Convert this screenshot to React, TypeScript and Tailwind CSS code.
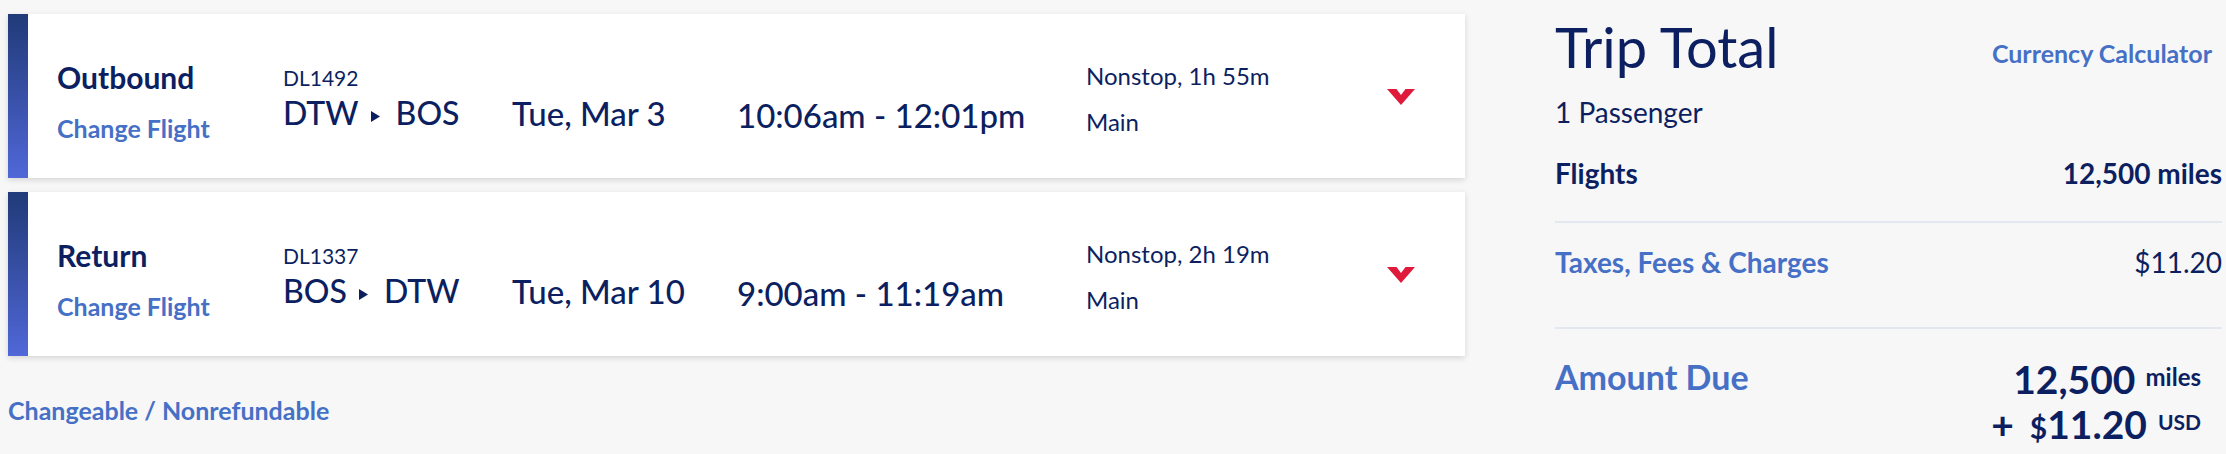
import React from "react";

type Leg = {
  label: string;
  flight: string;
  from: string;
  to: string;
  date: string;
  time: string;
  duration: string;
  cabin: string;
};

const legs: Leg[] = [
  {
    label: "Outbound",
    flight: "DL1492",
    from: "DTW",
    to: "BOS",
    date: "Tue, Mar 3",
    time: "10:06am - 12:01pm",
    duration: "Nonstop, 1h 55m",
    cabin: "Main",
  },
  {
    label: "Return",
    flight: "DL1337",
    from: "BOS",
    to: "DTW",
    date: "Tue, Mar 10",
    time: "9:00am - 11:19am",
    duration: "Nonstop, 2h 19m",
    cabin: "Main",
  },
];

function FlightCard({ leg }: { leg: Leg }) {
  return (
    <div className="flex h-[164px] bg-white shadow-[0_2px_6px_rgba(0,0,0,0.14)]">
      {/* side bar */}
      <div className="w-[20px] shrink-0 bg-linear-to-b from-[#213a78] to-[#5068d8]" />

      <div className="ml-[29px] mt-[45px] flex w-[226px] flex-col">
        <span className="text-[30px] font-bold leading-[36px]">{leg.label}</span>
        <a href="#" className="mt-[18px] text-[25px] font-bold leading-[30px] text-[#4670c6]">
          Change Flight
        </a>
      </div>

      <div className="mt-[52px] flex w-[229px] flex-col">
        <span className="text-[21px] leading-[24px]">{leg.flight}</span>
        <div className="mt-[4px] flex items-start text-[32px] font-medium leading-[38px]">
          <span>{leg.from}</span>
          <svg className="ml-[12px] mr-[16px] mt-[17px]" width="9" height="11" viewBox="0 0 9 11">
            <polygon points="0,0 9,5.5 0,11" fill="#0c1f61" />
          </svg>
          <span>{leg.to}</span>
        </div>
      </div>

      <div className="mt-[80px] w-[225px] text-[33px] font-medium leading-[38px]">{leg.date}</div>
      <div className="mt-[81px] w-[349px] text-[33px] font-medium leading-[40px]">{leg.time}</div>

      <div className="mt-[47px] flex w-[301px] flex-col text-[24px] leading-[30px]">
        <span>{leg.duration}</span>
        <span className="mt-[16px]">{leg.cabin}</span>
      </div>

      <button className="mt-[75px] h-[16px] w-[28px]">
        <svg width="28" height="16" viewBox="0 0 28 16">
          <polygon points="0,0 9.5,0 14,6 18.5,0 28,0 14,16" fill="#e01a3b" />
        </svg>
      </button>
    </div>
  );
}

export default function App() {
  return (
    <div className="flex h-[454px] w-[2226px] bg-[#f7f7f7] pl-[8px] pt-[14px] font-['Lato','Open_Sans',sans-serif] text-[#0c1f61]">
      {/* Flights */}
      <div className="flex w-[1457px] flex-col">
        <FlightCard leg={legs[0]} />
        <div className="mt-[14px]">
          <FlightCard leg={legs[1]} />
        </div>
        <a href="#" className="mt-[39px] text-[25px] font-bold leading-[30px] text-[#4670c6]">
          Changeable / Nonrefundable
        </a>
      </div>

      {/* Trip total */}
      <div className="ml-[90px] flex w-[667px] flex-col">
        <div className="flex items-start justify-between">
          <h2 className="text-[56px] leading-[66px]">Trip Total</h2>
          <a href="#" className="mr-[10px] mt-[25px] text-[25px] font-bold leading-[28px] text-[#4670c6]">
            Currency Calculator
          </a>
        </div>
        <p className="mt-[15px] text-[28px] leading-[34px]">1 Passenger</p>

        <div className="mt-[27px] flex justify-between border-b-2 border-[#e3e8f0] pb-[31px] text-[28px] font-bold leading-[34px]">
          <span>Flights</span>
          <span>12,500 miles</span>
        </div>

        <div className="flex justify-between border-b-2 border-[#e3e8f0] pb-[48px] pt-[22px] text-[28px] leading-[34px]">
          <a href="#" className="font-bold text-[#4670c6]">
            Taxes, Fees &amp; Charges
          </a>
          <span>$11.20</span>
        </div>

        <div className="flex items-start justify-between pt-[28px]">
          <span className="text-[34px] font-bold leading-[40px] text-[#4670c6]">Amount Due</span>
          <div className="flex flex-col items-end pr-[21px] font-bold">
            <div className="flex items-start">
              <span className="text-[39px] leading-[44px]">12,500</span>
              <span className="ml-[10px] mt-[8px] text-[24px] leading-[24px]">miles</span>
            </div>
            <div className="flex items-start">
              <div className="flex h-[46px] items-baseline leading-[46px]">
                <span className="text-[39px]">+</span>
                <span className="ml-[16px] text-[30px]">$</span>
                <span className="text-[39px]">11.20</span>
              </div>
              <span className="ml-[11px] mt-[10px] text-[21px] leading-[21px]">USD</span>
            </div>
          </div>
        </div>
      </div>
    </div>
  );
}
